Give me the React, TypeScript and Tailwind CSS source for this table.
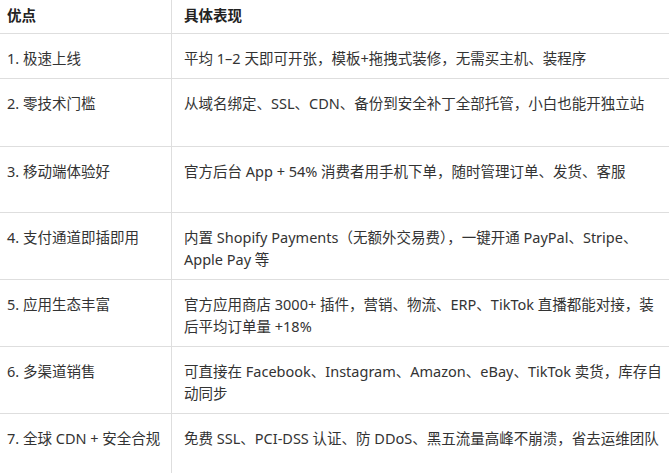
import React from 'react';

// rows of the comparison table; br marks where the reference wraps
const rows: { name: string; lines: string[]; h: string }[] = [
  { name: '1. 极速上线', lines: ['平均 1–2 天即可开张，模板+拖拽式装修，无需买主机、装程序'], h: 'h-[45px]' },
  { name: '2. 零技术门槛', lines: ['从域名绑定、SSL、CDN、备份到安全补丁全部托管，小白也能开独立站'], h: 'h-[68px]' },
  { name: '3. 移动端体验好', lines: ['官方后台 App + 54% 消费者用手机下单，随时管理订单、发货、客服'], h: 'h-[66px]' },
  { name: '4. 支付通道即插即用', lines: ['内置 Shopify Payments（无额外交易费），一键开通 PayPal、Stripe、', 'Apple Pay 等'], h: 'h-[67px]' },
  { name: '5. 应用生态丰富', lines: ['官方应用商店 3000+ 插件，营销、物流、ERP、TikTok 直播都能对接，装', '后平均订单量 +18%'], h: 'h-[67px]' },
  { name: '6. 多渠道销售', lines: ['可直接在 Facebook、Instagram、Amazon、eBay、TikTok 卖货，库存自', '动同步'], h: 'h-[67px]' },
  { name: '7. 全球 CDN + 安全合规', lines: ['免费 SSL、PCI-DSS 认证、防 DDoS、黑五流量高峰不崩溃，省去运维团队'], h: 'h-[80px]' },
];

export default function App() {
  return (
    <div className="w-[669px] h-[473px] overflow-hidden bg-white text-[14.5px] leading-[22px] text-[#333] font-['Noto_Sans','Noto_Sans_CJK_SC',sans-serif]">
      {/* header */}
      <div className="flex h-[34px] border-b border-[#dedede] font-bold text-[#222]">
        <div className="w-[172px] shrink-0 border-r border-[#dedede] pl-[7px] pt-[4px]">优点</div>
        <div className="flex-1 pl-[12px] pt-[4px]">具体表现</div>
      </div>

      {rows.map((r) => (
        <div key={r.name} className={`flex ${r.h} border-b border-[#dedede]`}>
          <div className="w-[172px] shrink-0 border-r border-[#dedede] pl-[7px] pt-[13px] whitespace-nowrap">{r.name}</div>
          <div className="flex-1 pl-[12px] pt-[13px] whitespace-nowrap">
            {r.lines.map((l, i) => (
              <div key={i}>{l}</div>
            ))}
          </div>
        </div>
      ))}
    </div>
  );
}
